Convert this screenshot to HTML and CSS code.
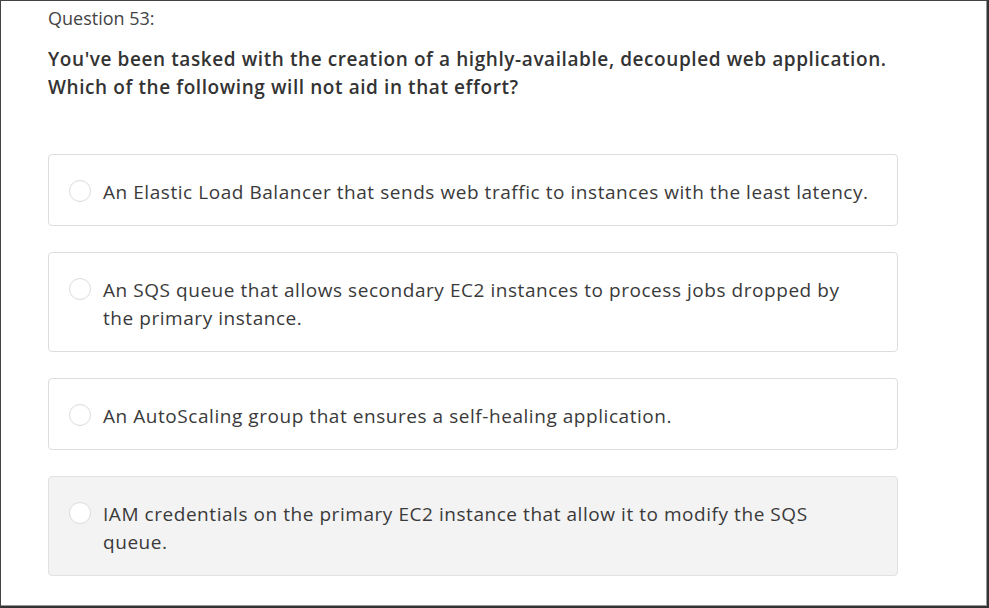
FILE: index.html
```html
<!DOCTYPE html>
<html>
<head>
<meta charset="utf-8">
<link rel="stylesheet" href="styles.css">
</head>
<body>
<div class="frame">
  <div class="title">Question 53:</div>
  <div class="question">You've been tasked with the creation of a highly-available, decoupled web application. Which of the following will not aid in that effort?</div>
  <div class="options">
    <div class="option"><span class="radio"></span><span class="label">An Elastic Load Balancer that sends web traffic to instances with the least latency.</span></div>
    <div class="option"><span class="radio"></span><span class="label">An SQS queue that allows secondary EC2 instances to process jobs dropped by the primary instance.</span></div>
    <div class="option"><span class="radio"></span><span class="label">An AutoScaling group that ensures a self-healing application.</span></div>
    <div class="option hover"><span class="radio"></span><span class="label">IAM credentials on the primary EC2 instance that allow it to modify the SQS queue.</span></div>
  </div>
</div>
</body>
</html>
```
FILE: styles.css
```css
html, body {
  margin: 0;
  padding: 0;
  background: #fff;
}
body {
  font-family: "Open Sans", "Noto Sans", sans-serif;
  color: #333;
}
.frame {
  box-sizing: border-box;
  width: 989px;
  height: 608px;
  border-top: 1px solid #444;
  border-left: 1px solid #444;
  border-right: 2px solid #333;
  border-bottom: 2px solid #333;
  box-shadow: inset -1px -1px 0 #999;
  padding: 3px 0 0 47px;
  overflow: hidden;
}
.title {
  font-size: 18px;
  line-height: 28px;
  color: #444;
}
.question {
  margin-top: 13px;
  font-size: 19px;
  font-weight: 600;
  line-height: 28px;
  letter-spacing: 0.58px;
  color: #333;
  width: 860px;
}
.options {
  margin-top: 53px;
  display: flex;
  flex-direction: column;
  gap: 26px;
  width: 850px;
}
.option {
  box-sizing: border-box;
  display: flex;
  align-items: flex-start;
  padding: 23px 24px 19px 20px;
  border: 1px solid #ddd;
  border-radius: 4px;
  background: #fff;
}
.option.hover {
  background: #f3f3f3;
  border-color: #e2e2e2;
}
.radio {
  flex: none;
  box-sizing: border-box;
  width: 22px;
  height: 22px;
  margin-top: 2px;
  border: 1px solid #dcdcdc;
  border-radius: 50%;
  background: #fff;
  margin-right: 12px;
}
.label {
  font-size: 19px;
  line-height: 28px;
  letter-spacing: 0.55px;
  color: #3a3a3a;
}
```
